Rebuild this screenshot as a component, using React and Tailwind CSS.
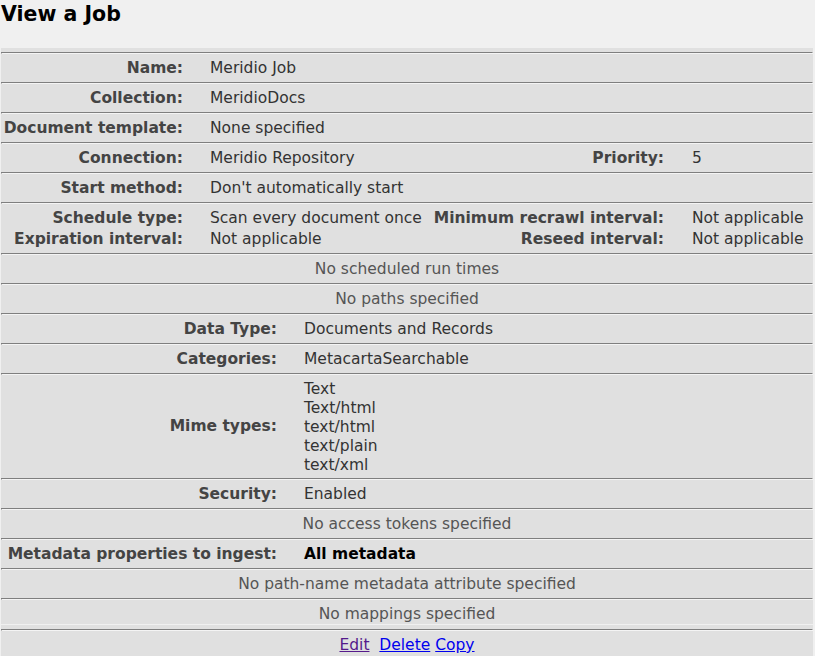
const font = { fontFamily: '"DejaVu Sans", Verdana, sans-serif' };

function Sep() {
  return (
    <div className="h-[9px] pt-[4px]">
      <div className="border-t border-t-[#7f7f7f] border-b border-b-[#f4f4f4] border-l border-l-[#7f7f7f] border-r border-r-[#f4f4f4] h-[2px]" />
    </div>
  );
}

function Row({ label, value, label2, value2 }) {
  return (
    <div className="flex h-[21px] leading-[23px] whitespace-nowrap">
      <div className="w-[182px] text-right font-bold text-[#444]">{label}</div>
      <div className="ml-[27px] flex-1 text-[#333]">{value}</div>
      {label2 && <div className="text-right font-bold text-[#444]">{label2}</div>}
      {label2 && <div className="ml-[28px] w-[121px] text-[#333]">{value2}</div>}
    </div>
  );
}

function Row2({ label, children, bold }) {
  return (
    <div className="flex h-[21px] leading-[23px] whitespace-nowrap">
      <div className="w-[276px] text-right font-bold text-[#444]">{label}</div>
      <div className={`ml-[27px] flex-1 ${bold ? 'font-bold text-black' : 'text-[#333]'}`}>{children}</div>
    </div>
  );
}

function Msg({ children }) {
  return <div className="h-[21px] leading-[23px] text-center text-[#555]">{children}</div>;
}

export default function App() {
  return (
    <div className="min-h-[656px] bg-[#f0f0f0] text-[15.5px]" style={font}>
      <div className="h-[48px] pt-[2px]">
        <h1 className="text-[20.5px] font-bold leading-[24px] text-black pl-px">View a Job</h1>
      </div>

      <div className="ml-px w-[812px] bg-[#e0e0e0]">
        <Sep />
        <Row label="Name:" value="Meridio Job" />
        <Sep />
        <Row label="Collection:" value="MeridioDocs" />
        <Sep />
        <Row label="Document template:" value="None specified" />
        <Sep />
        <Row label="Connection:" value="Meridio Repository" label2="Priority:" value2="5" />
        <Sep />
        <Row label="Start method:" value="Don't automatically start" />
        <Sep />
        <Row label="Schedule type:" value="Scan every document once" label2="Minimum recrawl interval:" value2="Not applicable" />
        <Row label="Expiration interval:" value="Not applicable" label2="Reseed interval:" value2="Not applicable" />
        <Sep />
        <Msg>No scheduled run times</Msg>
        <Sep />
        <Msg>No paths specified</Msg>
        <Sep />
        <Row2 label="Data Type:">Documents and Records</Row2>
        <Sep />
        <Row2 label="Categories:">MetacartaSearchable</Row2>
        <Sep />
        <div className="flex items-center h-[96px] whitespace-nowrap">
          <div className="w-[276px] text-right font-bold text-[#444] leading-[23px]">Mime types:</div>
          <div className="ml-[27px] flex-1 text-[#333] leading-[19px] pt-[2px]">
            <div>Text</div>
            <div>Text/html</div>
            <div>text/html</div>
            <div>text/plain</div>
            <div>text/xml</div>
          </div>
        </div>
        <Sep />
        <Row2 label="Security:">Enabled</Row2>
        <Sep />
        <Msg>No access tokens specified</Msg>
        <Sep />
        <Row2 label="Metadata properties to ingest:" bold>All metadata</Row2>
        <Sep />
        <Msg>No path-name metadata attribute specified</Msg>
        <Sep />
        <Msg>No mappings specified</Msg>
      </div>

      <div className="mt-px ml-px w-[812px] bg-[#e0e0e0]">
        <Sep />
        <div className="h-[22px] leading-[23px] text-center">
          <a href="#" className="underline text-[#551a8b]">Edit</a>
          {'\u00a0 '}
          <a href="#" className="underline text-[#0000ee]">Delete</a>{' '}
          <a href="#" className="underline text-[#0000ee]">Copy</a>
        </div>
      </div>
    </div>
  );
}
